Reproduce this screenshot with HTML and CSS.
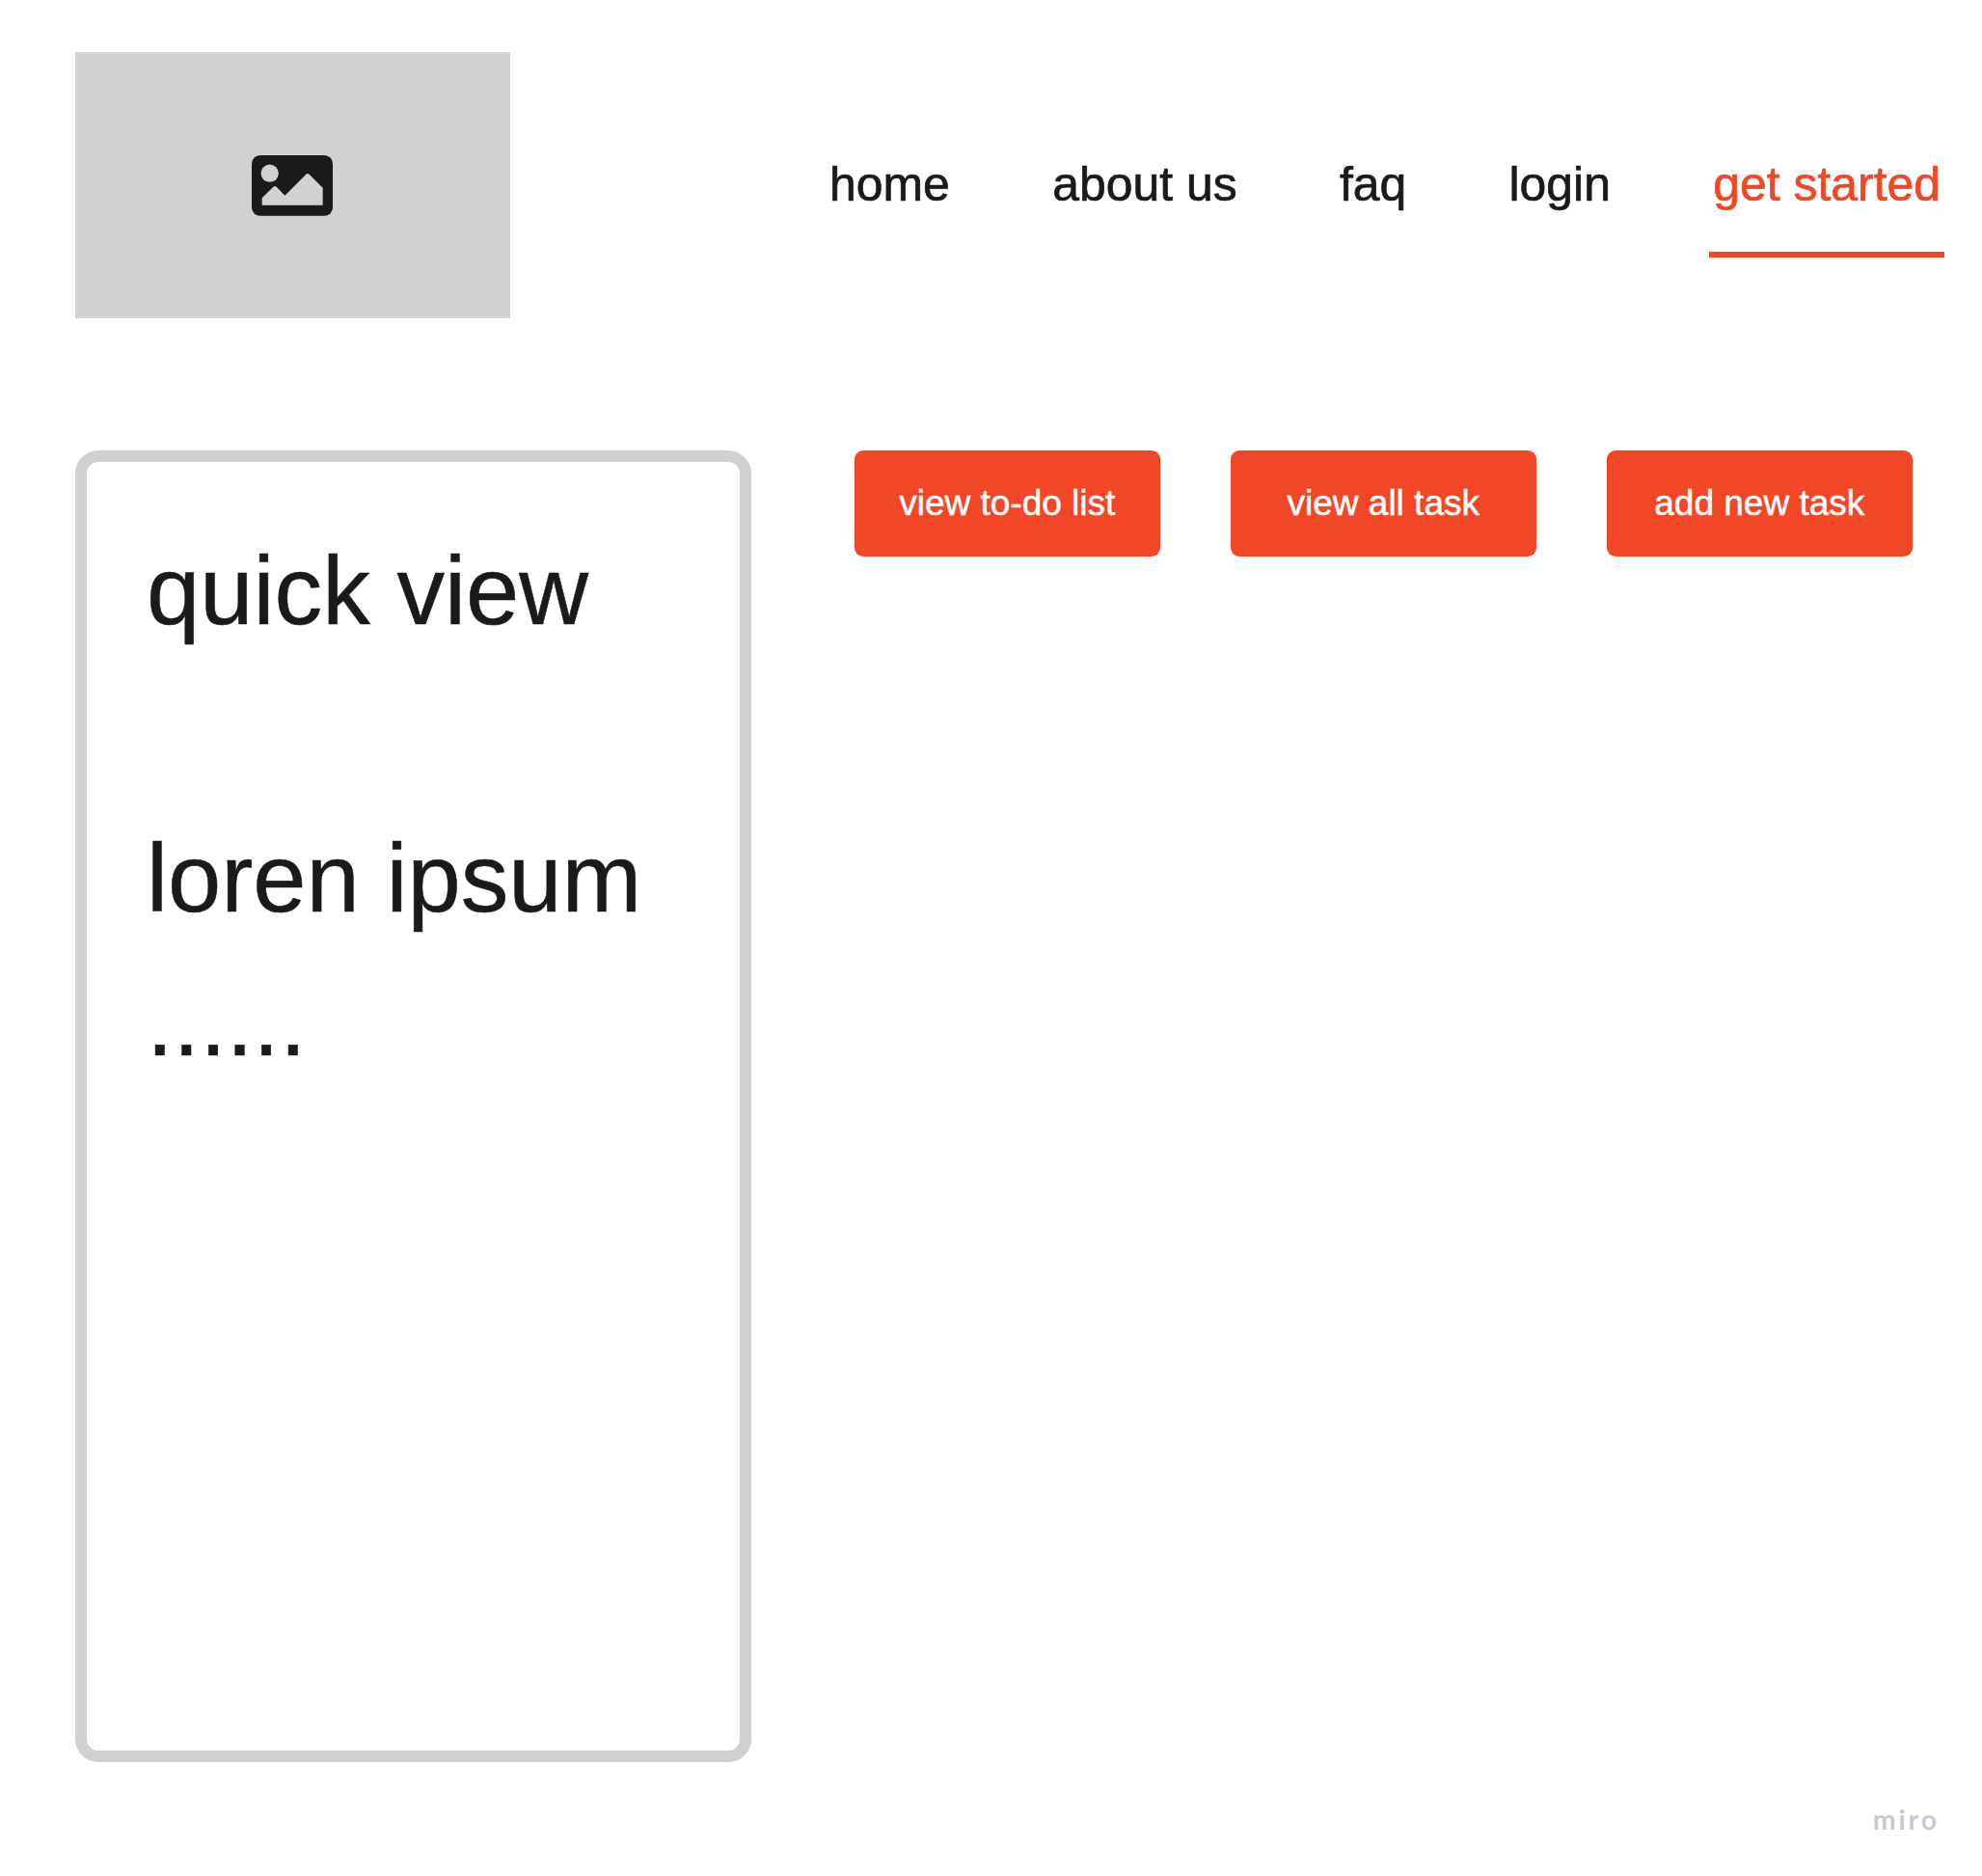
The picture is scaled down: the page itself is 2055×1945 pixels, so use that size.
FILE: index.html
```html
<!DOCTYPE html>
<html lang="en">
<head>
<meta charset="utf-8">
<title>Task board</title>
<link rel="stylesheet" href="styles.css">
</head>
<body>
<div class="page">
  <header class="header">
    <div class="logo">
      <svg class="logo-icon" viewBox="64 63.5 252 188" aria-hidden="true">
        <rect x="64" y="63.5" width="252" height="188" rx="26" fill="#1a1a1a"/>
        <circle cx="120" cy="119.5" r="27.5" fill="#d1d1d1"/>
        <path d="M96 196 L131 161.500 Q136 157 141 161.500 L167 188.500 L233 123 Q238 118.500 243 123 L285 165 V219 H96 Z" fill="#d1d1d1"/>
      </svg>
    </div>
    <nav class="nav">
      <a class="nav-link">home</a>
      <a class="nav-link">about us</a>
      <a class="nav-link">faq</a>
      <a class="nav-link">login</a>
      <a class="nav-link nav-link-active">get started</a>
    </nav>
  </header>
  <main class="main">
    <section class="card">
      <h1 class="card-title">quick view</h1>
      <p class="card-text">loren ipsum<br>......</p>
    </section>
    <div class="actions">
      <button class="button">view to-do list</button>
      <button class="button">view all task</button>
      <button class="button">add new task</button>
    </div>
  </main>
  <footer class="footer"><span class="brand">miro</span></footer>
</div>
</body>
</html>
```
FILE: styles.css
```css
* {
  box-sizing: border-box;
}

body {
  margin: 0;
  background: #fff;
  color: #1a1a1a;
  font-family: "Liberation Sans", Arial, sans-serif;
}

.page {
  display: flex;
  flex-direction: column;
  width: 2055px;
  height: 1945px;
  padding: 54.4px 39px 0 78px;
  overflow: hidden;
}

.header {
  display: flex;
  justify-content: space-between;
  height: 276.1px;
}

.logo {
  display: flex;
  align-items: center;
  justify-content: center;
  width: 451px;
  padding-right: 1px;
  background: #d1d1d1;
}

.logo-icon {
  width: 84px;
  height: 62.7px;
}

.nav {
  display: flex;
  align-items: flex-start;
  gap: 106.3px;
  padding: 106.6px 4px 0 0;
}

.nav-link {
  font-size: 49.9px;
  line-height: 60px;
  white-space: nowrap;
  -webkit-text-stroke: 0.7px currentColor;
}

.nav-link-active {
  margin: 0 -4px;
  padding: 0 4px 40px;
  border-bottom: 6.5px solid #ee4827;
  color: #ee4827;
}

.main {
  display: flex;
  justify-content: space-between;
  align-items: flex-start;
  margin-top: 136.5px;
  padding-right: 33px;
}

.card {
  width: 701.4px;
  height: 1360px;
  padding: 59px 0 0 62px;
  border: 12px solid #d0d0d0;
  border-radius: 24px;
  font-size: 99.3px;
  line-height: 149px;
  -webkit-text-stroke: 0.5px currentColor;
}

.card-title {
  margin: 0 0 149px;
  font: inherit;
}

.card-text {
  margin: 0;
}

.actions {
  display: flex;
  gap: 72.5px;
}

.button {
  width: 317.5px;
  height: 110px;
  padding: 0;
  border: 0;
  border-radius: 9px;
  background: #f24726;
  color: #fff;
  font: 37px "Liberation Sans", Arial, sans-serif;
  white-space: nowrap;
  -webkit-text-stroke: 0.5px currentColor;
}

.footer {
  display: flex;
  justify-content: flex-end;
  padding: 41px 5px 0 0;
}

.brand {
  color: #c9c9d5;
  font: 700 28.5px/36px Lato, sans-serif;
  letter-spacing: 2.9px;
}
```
